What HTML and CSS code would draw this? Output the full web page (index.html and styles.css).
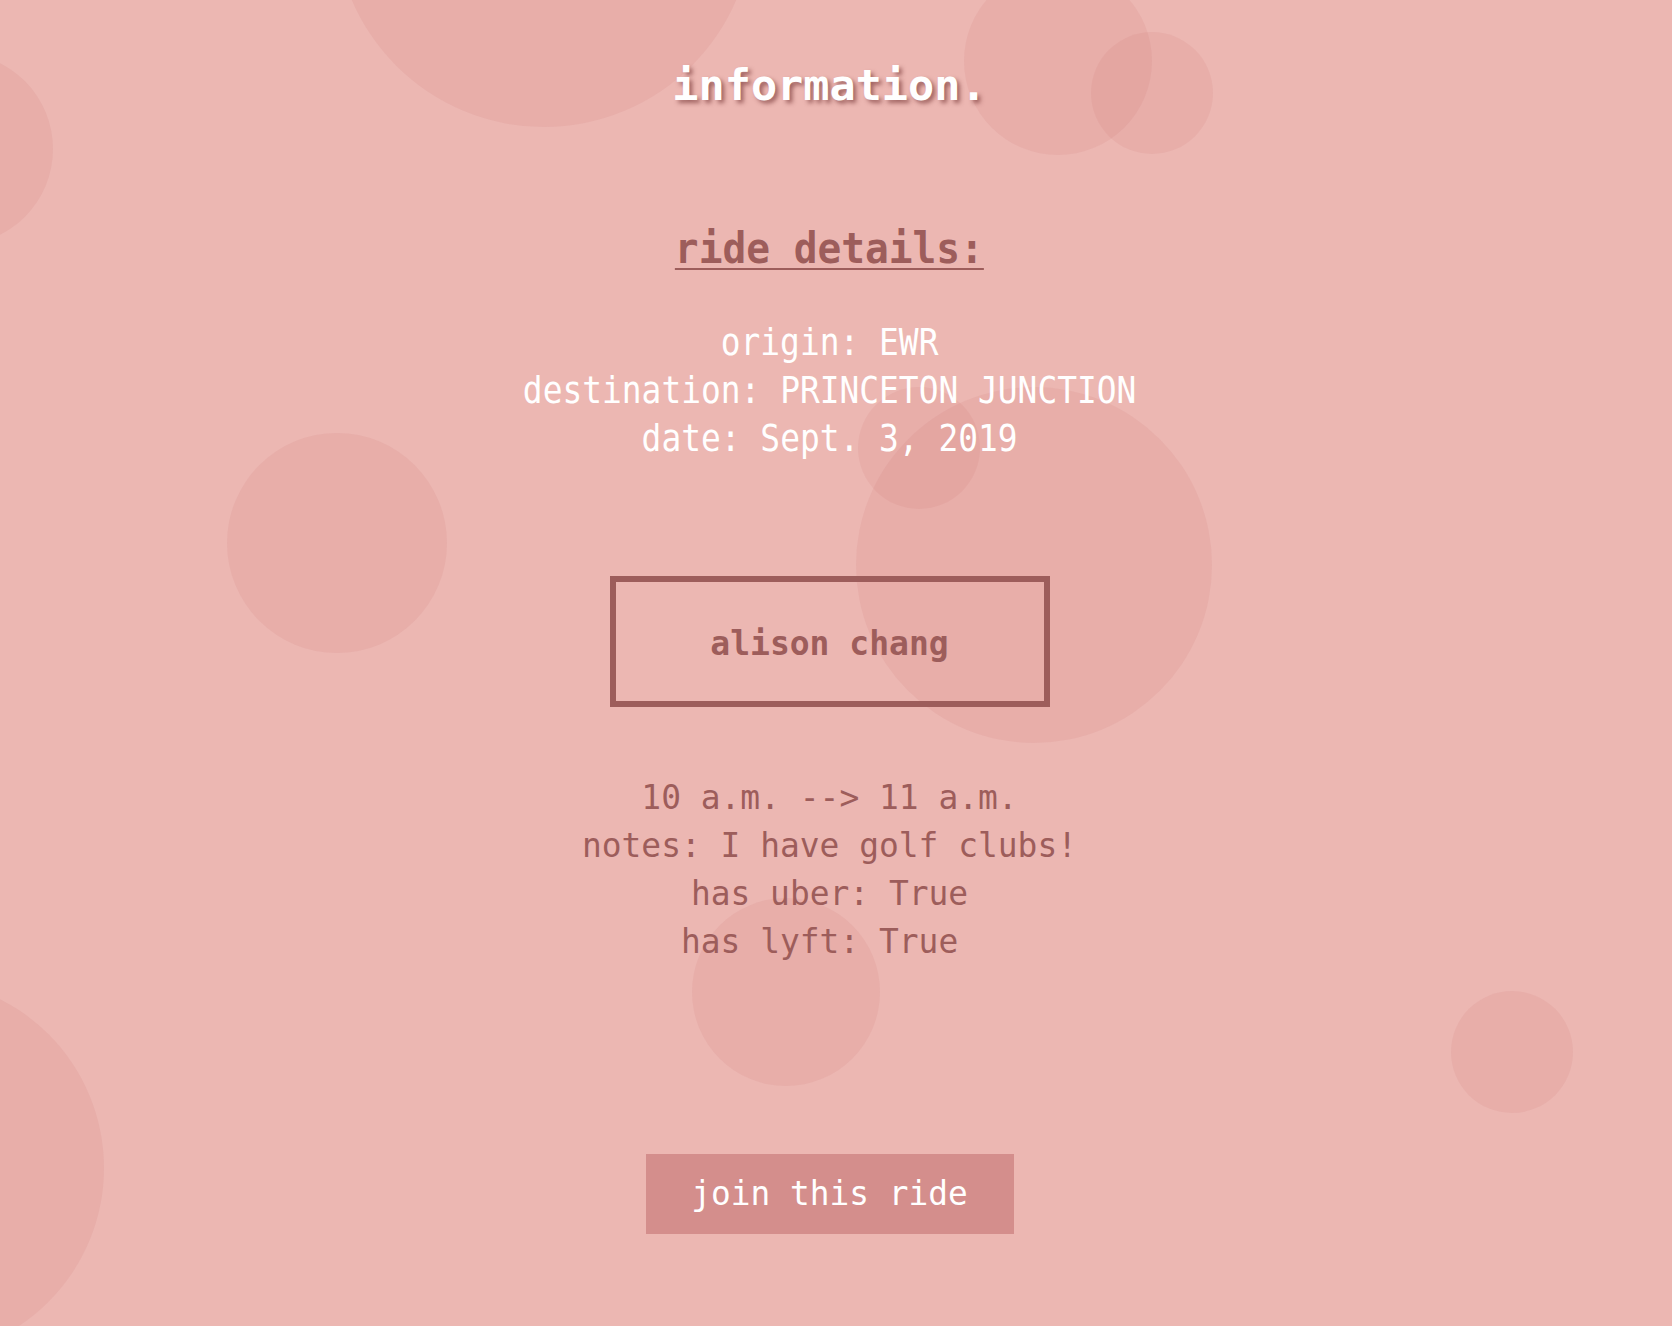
FILE: index.html
```html
<!DOCTYPE html>
<html>
<head>
<meta charset="utf-8">
<title>information.</title>
<link rel="stylesheet" href="styles.css">
</head>
<body>
<div class="bubbles" aria-hidden="true">
  <span class="bubble" style="left:335px;top:-291px;width:418px;height:418px"></span>
  <span class="bubble" style="left:964px;top:-33px;width:188px;height:188px"></span>
  <span class="bubble" style="left:1091px;top:32px;width:122px;height:122px"></span>
  <span class="bubble" style="left:-139px;top:53px;width:192px;height:192px"></span>
  <span class="bubble" style="left:227px;top:433px;width:220px;height:220px"></span>
  <span class="bubble" style="left:856px;top:387px;width:356px;height:356px"></span>
  <span class="bubble" style="left:858px;top:387px;width:122px;height:122px"></span>
  <span class="bubble" style="left:692px;top:898px;width:188px;height:188px"></span>
  <span class="bubble" style="left:1451px;top:991px;width:122px;height:122px"></span>
  <span class="bubble" style="left:-274px;top:979px;width:378px;height:378px"></span>
</div>
<main class="page">
  <h1 class="title">information.</h1>
  <h2 class="section"><span class="squeeze">ride details:</span></h2>
  <div class="details"><span class="squeeze">
    origin: EWR<br>
    destination: PRINCETON JUNCTION<br>
    date: Sept. 3, 2019
  </span></div>
  <div class="card">alison chang</div>
  <div class="info">
    10 a.m. --&gt; 11 a.m.<br>
    notes: I have golf clubs!<br>
    has uber: True<br>
    has lyft: True&nbsp;
  </div>
  <button class="join">join this ride</button>
</main>
</body>
</html>
```

FILE: styles.css
```css
html, body {
  margin: 0;
  padding: 0;
}
body {
  background: #ecb7b2;
  font-family: "DejaVu Sans Mono", "Liberation Mono", monospace;
  width: 1672px;
  height: 1326px;
  overflow: hidden;
  position: relative;
}
.bubbles {
  position: absolute;
  inset: 0;
  overflow: hidden;
  z-index: 0;
}
.bubble {
  position: absolute;
  border-radius: 50%;
  background: rgba(200, 100, 100, 0.1);
}
.page {
  position: relative;
  z-index: 1;
  display: flex;
  flex-direction: column;
  align-items: center;
  padding-top: 60px;
  padding-right: 13px;
}
.title {
  margin: 0;
  font-size: 43.5px;
  line-height: 50px;
  font-weight: bold;
  color: #ffffff;
  text-shadow: 3px 3px 4px rgba(120, 55, 55, 0.65);
}
.squeeze {
  display: inline-block;
  white-space: nowrap;
}
.section {
  margin: 114px 0 0;
  font-size: 42px;
  line-height: 50px;
  font-weight: bold;
  color: #9d5d5b;
}
.section .squeeze {
  transform: scaleX(0.94);
  text-decoration: underline;
  text-decoration-thickness: 2px;
  text-underline-offset: 5px;
}
.details {
  margin-top: 44px;
  font-size: 38px;
  line-height: 48px;
  color: #ffffff;
  text-align: center;
}
.details .squeeze {
  transform: scaleX(0.865);
}
.card {
  margin-top: 114px;
  box-sizing: border-box;
  width: 440px;
  height: 131px;
  border: 6px solid #9d5d5b;
  display: flex;
  align-items: center;
  justify-content: center;
  padding-top: 4px;
  font-size: 33px;
  font-weight: bold;
  color: #9d5d5b;
}
.info {
  margin-top: 67px;
  font-size: 32.9px;
  line-height: 48px;
  color: #9d5d5b;
  text-align: center;
}
.join {
  margin-top: 188px;
  width: 368px;
  height: 80px;
  border: none;
  background: #d48e8c;
  color: #ffffff;
  font-family: "DejaVu Sans Mono", "Liberation Mono", monospace;
  font-size: 32.8px;
  padding: 0;
  cursor: pointer;
}
```
